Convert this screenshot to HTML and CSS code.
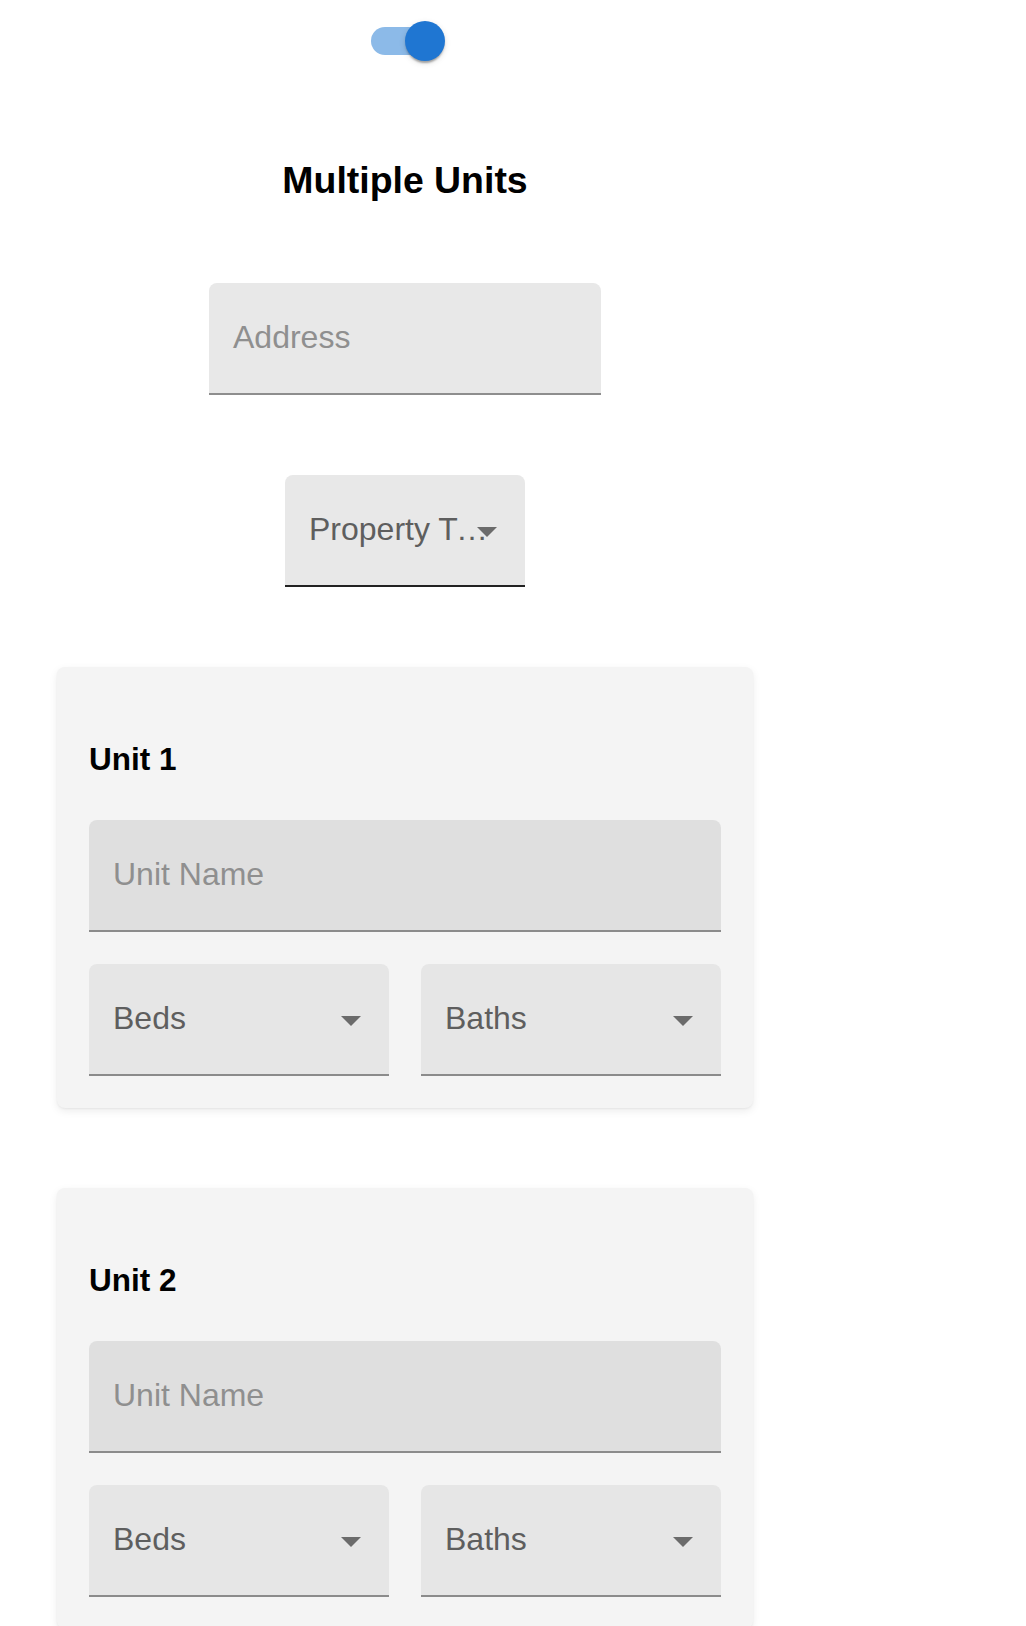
FILE: index.html
```html
<!DOCTYPE html>
<html lang="en">
<head>
<meta charset="utf-8">
<title>Multiple Units</title>
<link rel="stylesheet" href="styles.css">
</head>
<body>
<div class="page">
  <div class="switch" role="switch" aria-checked="true">
    <span class="switch-track"></span>
    <span class="switch-thumb"></span>
  </div>

  <h3 class="page-title">Multiple Units</h3>

  <div class="field field-address">
    <span class="placeholder">Address</span>
  </div>

  <div class="field field-select field-property">
    <span class="select-value">Property Type</span>
    <svg class="select-icon" viewBox="0 0 24 24" aria-hidden="true"><path d="M7 10l5 5 5-5z"/></svg>
  </div>

  <section class="unit-card">
    <h4 class="unit-title">Unit 1</h4>
    <div class="field field-name">
      <span class="placeholder">Unit Name</span>
    </div>
    <div class="unit-row">
      <div class="field field-select field-small">
        <span class="select-value">Beds</span>
        <svg class="select-icon" viewBox="0 0 24 24" aria-hidden="true"><path d="M7 10l5 5 5-5z"/></svg>
      </div>
      <div class="field field-select field-small">
        <span class="select-value">Baths</span>
        <svg class="select-icon" viewBox="0 0 24 24" aria-hidden="true"><path d="M7 10l5 5 5-5z"/></svg>
      </div>
    </div>
  </section>

  <section class="unit-card">
    <h4 class="unit-title">Unit 2</h4>
    <div class="field field-name">
      <span class="placeholder">Unit Name</span>
    </div>
    <div class="unit-row">
      <div class="field field-select field-small">
        <span class="select-value">Beds</span>
        <svg class="select-icon" viewBox="0 0 24 24" aria-hidden="true"><path d="M7 10l5 5 5-5z"/></svg>
      </div>
      <div class="field field-select field-small">
        <span class="select-value">Baths</span>
        <svg class="select-icon" viewBox="0 0 24 24" aria-hidden="true"><path d="M7 10l5 5 5-5z"/></svg>
      </div>
    </div>
  </section>
</div>
</body>
</html>
```

FILE: styles.css
```css
* {
  box-sizing: border-box;
}

html, body {
  margin: 0;
  padding: 0;
  background: #ffffff;
}

body {
  font-family: "Liberation Sans", Arial, Helvetica, sans-serif;
  color: #000000;
}

.page {
  width: 810px;
  padding-top: 3px;
  display: flex;
  flex-direction: column;
  align-items: center;
}

/* ---------- switch ---------- */
.switch {
  position: relative;
  width: 116px;
  height: 76px;
  flex: none;
}

.switch-track {
  position: absolute;
  left: 24px;
  top: 24px;
  width: 68px;
  height: 28px;
  border-radius: 14px;
  background: #8cbae8;
}

.switch-thumb {
  position: absolute;
  left: 58px;
  top: 18px;
  width: 40px;
  height: 40px;
  border-radius: 50%;
  background: #1f76d2;
  box-shadow: 0 4px 2px -2px rgba(0, 0, 0, 0.2),
              0 2px 2px 0 rgba(0, 0, 0, 0.14),
              0 2px 6px 0 rgba(0, 0, 0, 0.12);
}

/* ---------- title ---------- */
.page-title {
  margin: 79px 0 81px;
  font-size: 37.44px;
  line-height: 44px;
  font-weight: 700;
}

/* ---------- fields ---------- */
.field {
  position: relative;
  flex: none;
  height: 112px;
  padding: 31px 24px 0;
  border-radius: 8px 8px 0 0;
  border-bottom: 2px solid #8e8e8e;
  background: #e8e8e8;
  font-size: 32px;
  line-height: 46px;
}

.placeholder {
  display: block;
  color: #8f8f8f;
  white-space: nowrap;
}

.select-value {
  display: block;
  color: #5e5e5e;
  white-space: nowrap;
  overflow: hidden;
  text-overflow: ellipsis;
}

.select-icon {
  position: absolute;
  right: 14px;
  top: 32px;
  width: 48px;
  height: 48px;
  fill: #6b6b6b;
}

.field-address {
  width: 392px;
  margin-bottom: 80px;
}

.field-property {
  width: 240px;
  padding-right: 31px;
  border-bottom-color: #222222;
  margin-bottom: 80px;
}

/* ---------- unit cards ---------- */
.unit-card {
  width: 696px;
  flex: none;
  padding: 32px;
  border-radius: 8px;
  background: #f4f4f4;
  box-shadow: 0 3px 8px rgba(0, 0, 0, 0.08), 0 1px 2px rgba(0, 0, 0, 0.05);
  margin-bottom: 80px;
}

.unit-title {
  margin: 42px 0 43px;
  font-size: 31.5px;
  line-height: 36px;
  font-weight: 700;
}

.field-name {
  width: 100%;
  background: #dfdfdf;
  border-bottom-color: #8b8b8b;
}

.unit-row {
  display: grid;
  grid-template-columns: 1fr 1fr;
  gap: 32px;
  margin-top: 32px;
}

.field-small {
  background: #e6e6e6;
  border-bottom-color: #8b8b8b;
  padding-right: 64px;
}
```
